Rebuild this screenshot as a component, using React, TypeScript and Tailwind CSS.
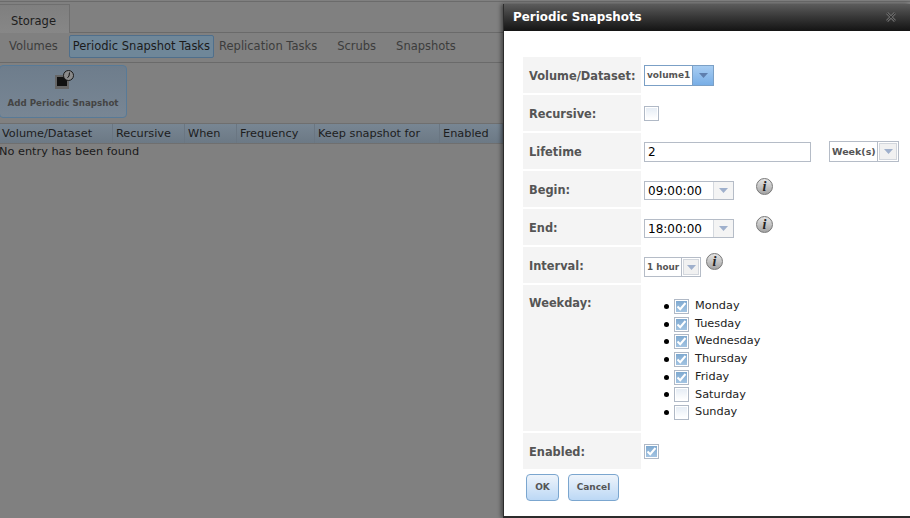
const font = 'font-["DejaVu_Sans",sans-serif]';

function Arrow({ active }: { active?: boolean }) {
    return (
        <svg width="9" height="5" viewBox="0 0 9 5" className="block">
            <path d="M0 0h9L4.500 5z" fill={active ? '#5f7fae' : '#9fb0cc'} />
        </svg>
    );
}

function Select({
    label,
    className,
    labelSize,
    buttonWidth,
    active,
}: {
    label: string;
    className: string;
    labelSize: string;
    buttonWidth: string;
    active?: boolean;
}) {
    return (
        <div className={`flex border ${active ? 'border-[#7ba0c6]' : 'border-[#b5bcc7]'} bg-white ${className}`}>
            <span className={`flex-1 self-center whitespace-nowrap pl-[2px] font-bold leading-none text-[#555] ${labelSize}`}>{label}</span>
            <span
                className={`flex shrink-0 items-center justify-center border-l ${buttonWidth} ${
                    active
                        ? 'border-[#7ba0c6] bg-gradient-to-b from-[#a8cdf2] to-[#78aee6]'
                        : 'border-[#b5bcc7] bg-[#f1f1f1] shadow-[inset_0_0_0_1px_#fff,inset_0_0_0_2px_#d3d7dd]'
                }`}
            >
                <Arrow active={active} />
            </span>
        </div>
    );
}

function TimeSelect({ value }: { value: string }) {
    return (
        <div className="flex h-[19px] w-[90px] border border-[#b5bcc7] bg-white">
            <span className="flex-1 pl-[3px] text-[12px] leading-[18px] text-black">{value}</span>
            <span className="flex w-[20px] items-center justify-center border-l border-[#d5d9df] bg-[#f4f4f4]">
                <Arrow />
            </span>
        </div>
    );
}

function Info({ className }: { className?: string }) {
    return (
        <span
            className={`flex h-[17px] w-[17px] items-center justify-center rounded-full border border-[#777] bg-gradient-to-b from-[#e6e6e6] to-[#a4a4a4] font-["Liberation_Serif",serif] text-[14px] font-bold italic leading-none text-[#222] ${className ?? ''}`}
        >
            i
        </span>
    );
}

function Check({ checked }: { checked?: boolean }) {
    return (
        <span className="flex h-[15px] w-[15px] shrink-0 border border-[#b0b9c6] bg-white p-px">
            <span
                className={`flex flex-1 items-center justify-center ${
                    checked ? 'bg-gradient-to-b from-[#7fa9d0] to-[#a3c4e2]' : 'bg-gradient-to-b from-[#e6edf5] to-white'
                }`}
            >
                {checked && (
                    <svg width="11" height="9" viewBox="0 0 11 9">
                        <path d="M1.500 4.500 4.200 7.200 9.500 1" fill="none" stroke="#fff" strokeWidth="2" />
                    </svg>
                )}
            </span>
        </span>
    );
}

function Row({ label, height, alignTop, children }: { label: string; height: string; alignTop?: boolean; children?: React.ReactNode }) {
    return (
        <div className={`flex gap-[3px] ${height}`}>
            <div
                className={`flex w-[118px] shrink-0 bg-[#f4f4f4] pl-[6px] text-[11.400px] font-bold text-[#555] ${
                    alignTop ? 'items-start pt-[12px] leading-[13px]' : 'items-center pt-[4px]'
                }`}
            >
                {label}
            </div>
            {children}
        </div>
    );
}

const days = [
    ['Monday', true],
    ['Tuesday', true],
    ['Wednesday', true],
    ['Thursday', true],
    ['Friday', true],
    ['Saturday', false],
    ['Sunday', false],
] as const;

const columns = [
    ['Volume/Dataset', 'w-[113px]'],
    ['Recursive', 'w-[72px]'],
    ['When', 'w-[52px]'],
    ['Frequency', 'w-[78px]'],
    ['Keep snapshot for', 'w-[125px]'],
    ['Enabled', 'flex-1'],
] as const;

export default function App() {
    return (
        <div className={`relative h-[518px] w-[910px] overflow-hidden bg-[#808080] text-[11.500px] ${font}`}>
            {/* page behind the dialog */}
            <div className="mt-px h-[3px] border-t border-[#6b6b6b]" />
            <div className="h-[29px] border-b border-[#6a6a6a]">
                <div className="flex h-[29px] w-[70px] items-center justify-center border border-b-0 border-l-0 border-[#6f6f6f] bg-gradient-to-b from-[#7f7f7f] to-[#878787] pr-[2px] pt-[5px] text-[#1d1d1d]">
                    Storage
                </div>
            </div>
            <div className="flex h-[30px] items-start border-b border-[#6a6a6a] pl-[9px] pt-[2px] leading-[23px] text-[#3c3c3c]">
                <span>Volumes</span>
                <span className="ml-[11px] mr-[5px] h-[23px] rounded-[2px] border border-[#4f6f8c] bg-[#6f8799] px-[3px] leading-[21px] text-[#1b1b1b]">
                    Periodic Snapshot Tasks
                </span>
                <span className="mr-[20px]">Replication Tasks</span>
                <span className="mr-[20px]">Scrubs</span>
                <span>Snapshots</span>
            </div>
            <div className="mt-[2px] -ml-px flex h-[53px] w-[128px] flex-col items-center rounded-[4px] border border-[#587a97] bg-gradient-to-b from-[#6e7d8c] to-[#788694]">
                <svg width="20" height="20" viewBox="0 0 20 20" className="mt-[4px] ml-[4px]">
                    <rect x="0" y="5" width="14" height="14" fill="#666" />
                    <rect x="2" y="7" width="10" height="9" fill="#111" />
                    <circle cx="13.500" cy="5.500" r="5" fill="#8a8a8a" stroke="#1a1a1a" strokeWidth="1" />
                    <path d="M14.500 2.500 14 6l-1.500 1.800" fill="none" stroke="#111" />
                </svg>
                <span className="mt-[8px] text-[8.700px] font-bold leading-[11px] text-[#444]">Add Periodic Snapshot</span>
            </div>
            <div className="mt-[5px] flex h-[21px] w-[503px] border-y border-[#6f6f6f] bg-gradient-to-b from-[#788693] to-[#6c7985] text-[11.300px] text-[#1d1d1d]">
                {columns.map(([name, width]) => (
                    <div key={name} className={`flex items-center border-r border-[#6a7682] pl-[3px] pt-[2px] first:pl-[2px] ${width}`}>
                        {name}
                    </div>
                ))}
            </div>
            <div className="-ml-px text-[11.300px] leading-[15px] text-[#1a1a1a]">No entry has been found</div>

            {/* dialog */}
            <div className="absolute left-[503px] top-[4px] flex h-[514px] w-[407px] flex-col border-b-2 border-l border-[#2c2c2c] bg-white shadow-[-2px_0_4px_rgba(0,0,0,0.45)]">
                <div className="flex h-[27px] shrink-0 items-center justify-between bg-gradient-to-b from-[#5c5c5c] to-[#141414] pl-[9px] pr-[14px]">
                    <span className="text-[11.900px] font-bold text-white">Periodic Snapshots</span>
                    <svg width="10" height="10" viewBox="0 0 10 10" className="-mt-[2px]">
                        <path d="M1 1l8 8M9 1l-8 8" stroke="#666" strokeWidth="3" />
                        <path d="M1 1l8 8M9 1l-8 8" stroke="#333" strokeWidth="1" />
                    </svg>
                </div>
                <div className="flex flex-col gap-[2px] pl-[19px] pt-[26px]">
                    <Row label="Volume/Dataset:" height="h-[36px]">
                        <div className="pt-[8px]">
                            <Select label="volume1" labelSize="text-[9px]" buttonWidth="w-[21px]" className="h-[21px] w-[70px]" active />
                        </div>
                    </Row>
                    <Row label="Recursive:" height="h-[36px]">
                        <div className="pt-[11px]">
                            <Check />
                        </div>
                    </Row>
                    <Row label="Lifetime" height="h-[36px]">
                        <div className="flex items-start gap-[18px] pt-[9px]">
                            <div className="h-[20px] w-[167px] border border-[#b5bcc7] pl-[3px] text-[12px] leading-[18px] text-black">2</div>
                            <Select label="Week(s)" labelSize="text-[9.500px]" buttonWidth="w-[21px]" className="-mt-px h-[21px] w-[70px]" />
                        </div>
                    </Row>
                    <Row label="Begin:" height="h-[36px]">
                        <div className="flex items-start pt-[10px]">
                            <TimeSelect value="09:00:00" />
                            <Info className="-mt-[3px] ml-[22px]" />
                        </div>
                    </Row>
                    <Row label="End:" height="h-[36px]">
                        <div className="flex items-start pt-[10px]">
                            <TimeSelect value="18:00:00" />
                            <Info className="-mt-[3px] ml-[22px]" />
                        </div>
                    </Row>
                    <Row label="Interval:" height="h-[36px]">
                        <div className="flex items-start pt-[10px]">
                            <Select label="1 hour" labelSize="text-[8.800px]" buttonWidth="w-[19px]" className="h-[20px] w-[57px]" />
                            <Info className="-mt-[4px] ml-[5px]" />
                        </div>
                    </Row>
                    <Row label="Weekday:" height="h-[146px]" alignTop>
                        <ul className="ml-[20px] mt-[12.700px] flex flex-col text-[11.300px] text-[#222]">
                            {days.map(([day, on]) => (
                                <li key={day} className="flex h-[17.700px] items-center">
                                    <span className="mr-[5px] h-[5px] w-[5px] rounded-full bg-black" />
                                    <Check checked={on} />
                                    <span className="ml-[6px]">{day}</span>
                                </li>
                            ))}
                        </ul>
                    </Row>
                    <Row label="Enabled:" height="h-[36px]">
                        <div className="pt-[11px]">
                            <Check checked />
                        </div>
                    </Row>
                </div>
                <div className="mt-[5px] flex gap-[9px] pl-[22px]">
                    <button className="h-[27px] w-[33px] rounded-[4px] border border-[#7ba6cf] bg-gradient-to-b from-[#eef4fb] to-[#bcd8f5] text-[9px] font-bold text-[#555]">
                        OK
                    </button>
                    <button className="h-[27px] w-[51px] rounded-[4px] border border-[#7ba6cf] bg-gradient-to-b from-[#eef4fb] to-[#bcd8f5] text-[9px] font-bold text-[#555]">
                        Cancel
                    </button>
                </div>
            </div>
        </div>
    );
}
